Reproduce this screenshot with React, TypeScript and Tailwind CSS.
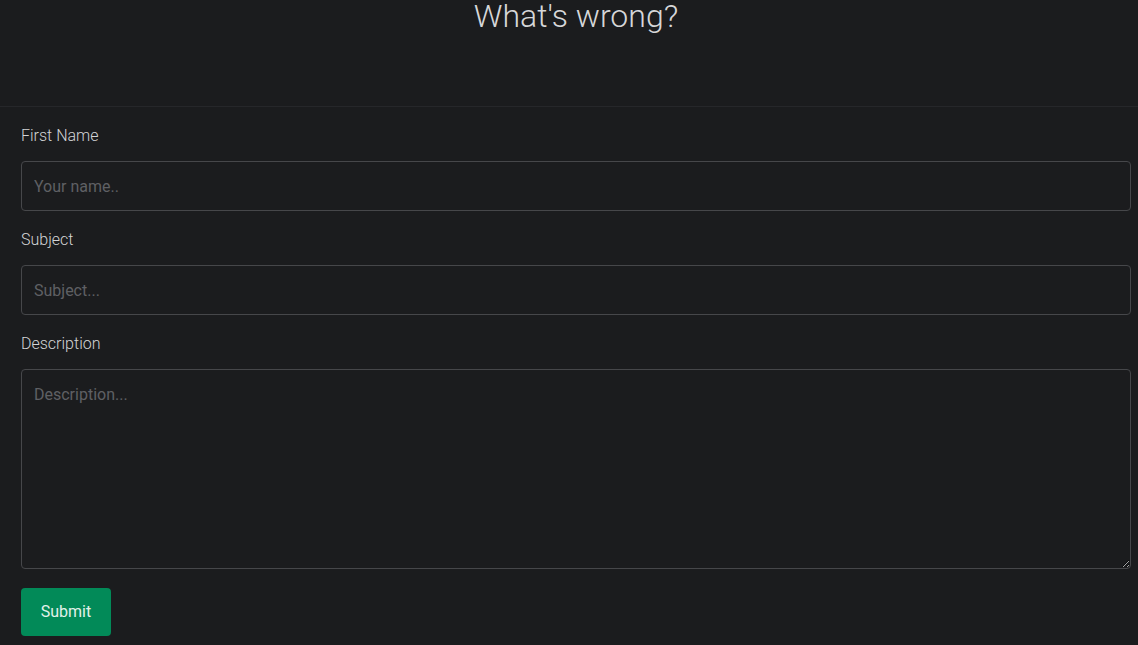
import React from 'react';

const font = { fontFamily: 'Roboto, "Noto Sans", sans-serif' };

export default function App() {
  return (
    <div style={font} className="min-h-[645px] w-full bg-[#1b1c1e] text-[#d2d3d5]">
      {/* Header */}
      <div className="h-[107px] border-b border-[#26272a] pl-[21px] pr-[7px]">
        <h1 className="text-center text-[32px] font-light leading-none text-[#d6d7d9]">What's wrong?</h1>
      </div>

      {/* Form */}
      <form className="pl-[21px] pr-[7px] pt-[17px]" onSubmit={(e) => e.preventDefault()}>
        <label className="block text-base font-light leading-6 text-[#d3d4d6]">First Name</label>
        <input
          type="text"
          placeholder="Your name.."
          className="mt-[13px] block h-[50px] w-full rounded-[4px] border border-[#46474a] bg-[#1b1c1e] px-[12px] text-base text-[#d2d3d5] outline-none placeholder:text-[#5f6064]"
        />

        <label className="mt-[17px] block text-base font-light leading-6 text-[#d3d4d6]">Subject</label>
        <input
          type="text"
          placeholder="Subject..."
          className="mt-[13px] block h-[50px] w-full rounded-[4px] border border-[#46474a] bg-[#1b1c1e] px-[12px] text-base text-[#d2d3d5] outline-none placeholder:text-[#5f6064]"
        />

        <label className="mt-[17px] block text-base font-light leading-6 text-[#d3d4d6]">Description</label>
        <textarea
          placeholder="Description..."
          className="mt-[13px] block h-[200px] w-full rounded-[4px] border border-[#46474a] bg-[#1b1c1e] px-[12px] pt-[13px] pb-[12px] text-base leading-6 text-[#d2d3d5] outline-none placeholder:text-[#5f6064]"
        />

        <button
          type="submit"
          className="mt-[19px] h-[48px] w-[90px] rounded-[4px] bg-[#028a58] text-base text-[#e3f1ea]"
        >
          Submit
        </button>
      </form>
    </div>
  );
}
